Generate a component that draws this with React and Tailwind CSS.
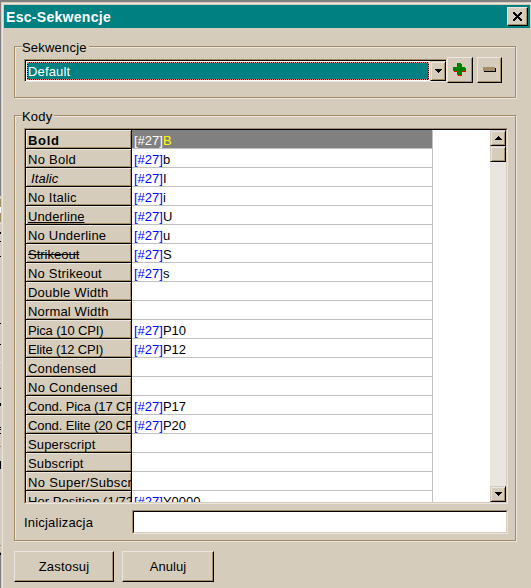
const raised =
  "border border-t-[#eae6df] border-l-[#eae6df] border-r-black border-b-black shadow-[inset_-1px_-1px_0_#a28d68] bg-[#d5ccbb]";
const scrollBtn =
  "border border-t-[#d5ccbb] border-l-[#d5ccbb] border-r-black border-b-black shadow-[inset_1px_1px_0_#eae6df,inset_-1px_-1px_0_#a28d68] bg-[#d5ccbb] flex items-center justify-center shrink-0";

const rows = [
  ["Bold", "B", "font-bold tracking-[0.7px]"],
  ["No Bold", "b", "tracking-[0.25px]"],
  ["Italic", "I", "italic pl-[3px] tracking-[0.1px]"],
  ["No Italic", "i", "tracking-[0.2px]"],
  ["Underline", "U", "underline underline-offset-1 tracking-[0.1px]"],
  ["No Underline", "u", "tracking-[0.2px]"],
  ["Strikeout", "S", "line-through"],
  ["No Strikeout", "s", "tracking-[0.2px]"],
  ["Double Width", "", "tracking-[0.2px]"],
  ["Normal Width", "", "tracking-[0.15px]"],
  ["Pica (10 CPI)", "P10", "tracking-[-0.15px]"],
  ["Elite (12 CPI)", "P12", "tracking-[-0.15px]"],
  ["Condensed", "", "tracking-[0.2px]"],
  ["No Condensed", "", "tracking-[0.25px]"],
  ["Cond. Pica (17 CPI)", "P17", "tracking-[-0.1px]"],
  ["Cond. Elite (20 CPI)", "P20", "tracking-[-0.1px]"],
  ["Superscript", "", "tracking-[0.15px]"],
  ["Subscript", "", "tracking-[0.15px]"],
  ["No Super/Subscript", "", "tracking-[0.35px]"],
  ["Hor Position (1/72)", "Y0000", "tracking-[0.05px]"],
];

// Slice of the window behind the dialog: [height, colour] from the top.
const strip = [
  [196, "#808080"], [1, "#eae6df"], [2, "#d5ccbb"], [8, "#a28d68"], [6, "#ffffff"], [9, "#a28d68"],
  [1, "#d5ccbb"], [1, "#eae6df"], [8, "#d5ccbb"], [2, "#000000"], [7, "#d5ccbb"], [1, "#000000"], [14, "#d5ccbb"],
  [1, "#000000"], [66, "#d5ccbb"], [1, "#000000"], [20, "#d5ccbb"], [1, "#000000"],
  [17, "#d5ccbb"], [1, "#eae6df"], [24, "#d5ccbb"], [1, "#a28d68"], [1, "#000000"], [14, "#d5ccbb"], [3, "#000000"], [21, "#d5ccbb"],
  [1, "#000000"], [1, "#d5ccbb"], [1, "#000000"], [3, "#d5ccbb"], [1, "#000000"], [12, "#d5ccbb"], [1, "#a28d68"],
  [14, "#d5ccbb"], [8, "#000000"],
  [76, "#d5ccbb"], [1, "#a28d68"], [6, "#d5ccbb"], [1, "#a28d68"], [2, "#000000"], [34, "#808080"],
];

function Arrow({ down }) {
  return (
    <svg width="7" height="4" viewBox="0 0 7 4" shapeRendering="crispEdges">
      <path d={down ? "M0 0h7v1h-1v1h-1v1h-1v1h-1v-1h-1v-1h-1v-1h-1z" : "M3 0h1v1h1v1h1v1h1v1h-7v-1h1v-1h1v-1h1z"} />
    </svg>
  );
}

function Group({ title, className, legend, children }) {
  return (
    <fieldset className={"relative ml-[10px] w-[502px] border border-[#a28d68] shadow-[1px_1px_0_#eae6df,inset_1px_1px_0_#eae6df] " + className}>
      <span className={"absolute left-[7px] top-[-8px] h-[17px] bg-[#d5ccbb] leading-[17px] " + legend}>{title}</span>
      {children}
    </fieldset>
  );
}

function Row({ row, selected }) {
  const [label, code, style] = row;
  return (
    <div className="flex h-[19px] shrink-0 whitespace-nowrap">
      <div className="h-[19px] w-[106px] overflow-hidden border-r border-b border-black bg-[#d5ccbb] pl-[2px] leading-[21px] shadow-[inset_1px_1px_0_#eae6df,inset_-1px_-1px_0_#a28d68]">
        <span className={style}>{label}</span>
      </div>
      <div className={"h-[19px] w-[301px] border-r border-b border-[#c0c0c0] pl-[2px] leading-[21px] " + (selected ? "bg-[#808080]" : "bg-white")}>
        {code && (
          <>
            <span className={selected ? "text-white" : "text-[#0000ff]"}>[#27]</span>
            <span className={selected ? "text-[#ffff00]" : "text-black"}>{code}</span>
          </>
        )}
      </div>
    </div>
  );
}

export default function App() {
  return (
    <div className="flex h-[588px] w-[531px] overflow-hidden bg-[#d5ccbb] font-['Liberation_Sans',Arial,sans-serif] text-[13px] text-black">
      <div className="flex w-px shrink-0 flex-col">
        {strip.map(([h, c], i) => (
          <div key={i} className="w-px shrink-0" style={{ height: h, background: c }} />
        ))}
      </div>
      <div className="flex w-[530px] flex-col border-t-2 border-[#808080]">
        <div className="ml-px mt-px h-[585px] w-[529px] border-l border-t border-[#eae6df] pl-px pt-px">
          <div className="flex h-[23px] w-[526px] items-center justify-between bg-[#008080] pl-[2px] pr-[2px]">
            <span className="text-[14px] font-bold leading-[22px] tracking-[0.3px] text-white">Esc-Sekwencje</span>
            <button className={raised + " mb-px flex h-[19px] w-[21px] items-center justify-center"}>
              <svg width="9" height="9" viewBox="0 0 9 9" shapeRendering="crispEdges">
                <path d="M0 0h2v1h1v1h1v1h1v-1h1v-1h1v-1h2v2h-1v1h-1v1h-1v1h1v1h1v1h1v2h-2v-1h-1v-1h-1v-1h-1v1h-1v1h-1v1h-2v-2h1v-1h1v-1h1v-1h-1v-1h-1v-1h-1z" />
              </svg>
            </button>
          </div>

          <Group title="Sekwencje" className="mt-[18px] h-[52px]" legend="w-[67px] tracking-[0.2px]">
            <div className="flex pl-[9px] pt-[10px]">
              <div className="mt-[2px] h-[23px] w-[423px] border border-b-[#eae6df] border-l-[#a28d68] border-r-[#eae6df] border-t-[#a28d68]">
                <div className="flex h-[21px] border-l border-t border-black bg-white">
                  <div className="my-px ml-px flex h-[18px] w-[402px] items-center border border-dotted border-[#ff7f7f] bg-black bg-clip-border text-white">
                    <span className="h-[16px] w-[400px] bg-[#008080] leading-[17px] tracking-[0.15px]">Default</span>
                  </div>
                  <div className={scrollBtn + " ml-px h-[20px] w-[16px]"}><Arrow down /></div>
                </div>
              </div>
              <button className={raised + " flex h-[26px] w-[26px] items-center justify-center pb-px pr-px"}>
                <svg width="13" height="13" viewBox="0 0 13 13" shapeRendering="crispEdges">
                  <path fill="#ff0000" d="M5 1h4v4h4v4h-4v4h-4v-4h-4v-4h4z" />
                  <path fill="#008000" d="M4 0h4v4h4v4h-4v4h-4v-4h-4v-4h4z" />
                </svg>
              </button>
              <button className={raised + " ml-[4px] flex h-[26px] w-[25px] items-center justify-center pb-px"}>
                <svg width="13" height="5" viewBox="0 0 13 5" shapeRendering="crispEdges">
                  <path d="M1 1h12v4h-12z" />
                  <path fill="#a28d68" d="M0 0h12v4h-12z" />
                </svg>
              </button>
            </div>
          </Group>

          <Group title="Kody" className="mt-[17px] h-[426px]" legend="w-[32px] tracking-[0.2px]">
            <div className="ml-[9px] mt-[12px] h-[376px] w-[484px] border border-b-[#eae6df] border-l-[#a28d68] border-r-[#eae6df] border-t-[#a28d68]">
              <div className="flex h-[374px] border border-b-[#d5ccbb] border-l-black border-r-[#d5ccbb] border-t-black bg-white">
                <div className="flex h-[372px] w-[464px] flex-col overflow-hidden">
                  {rows.map((r, i) => <Row key={r[0]} row={r} selected={i === 0} />)}
                </div>
                <div className="flex h-[372px] w-[16px] flex-col bg-[#eae6df]">
                  <div className={scrollBtn + " h-[16px]"}><Arrow /></div>
                  <div className={scrollBtn + " h-[16px]"} />
                  <div className={scrollBtn + " mt-auto h-[16px]"}><Arrow down /></div>
                </div>
              </div>
            </div>
            <div className="ml-[9px] mt-[6px] flex">
              <span className="w-[108px] leading-[25px] tracking-[0.2px]">Inicjalizacja</span>
              <div className="h-[24px] w-[376px] border border-b-[#eae6df] border-l-[#a28d68] border-r-[#eae6df] border-t-[#a28d68]">
                <div className="h-[22px] border border-b-[#d5ccbb] border-l-black border-r-[#d5ccbb] border-t-black bg-white" />
              </div>
            </div>
          </Group>

          <div className="ml-[10px] mt-[10px] flex gap-[8px]">
            <button className={raised + " h-[31px] w-[100px] tracking-[0.2px]"}>Zastosuj</button>
            <button className={raised + " h-[31px] w-[92px] tracking-[0.1px]"}>Anuluj</button>
          </div>
        </div>
      </div>
    </div>
  );
}
